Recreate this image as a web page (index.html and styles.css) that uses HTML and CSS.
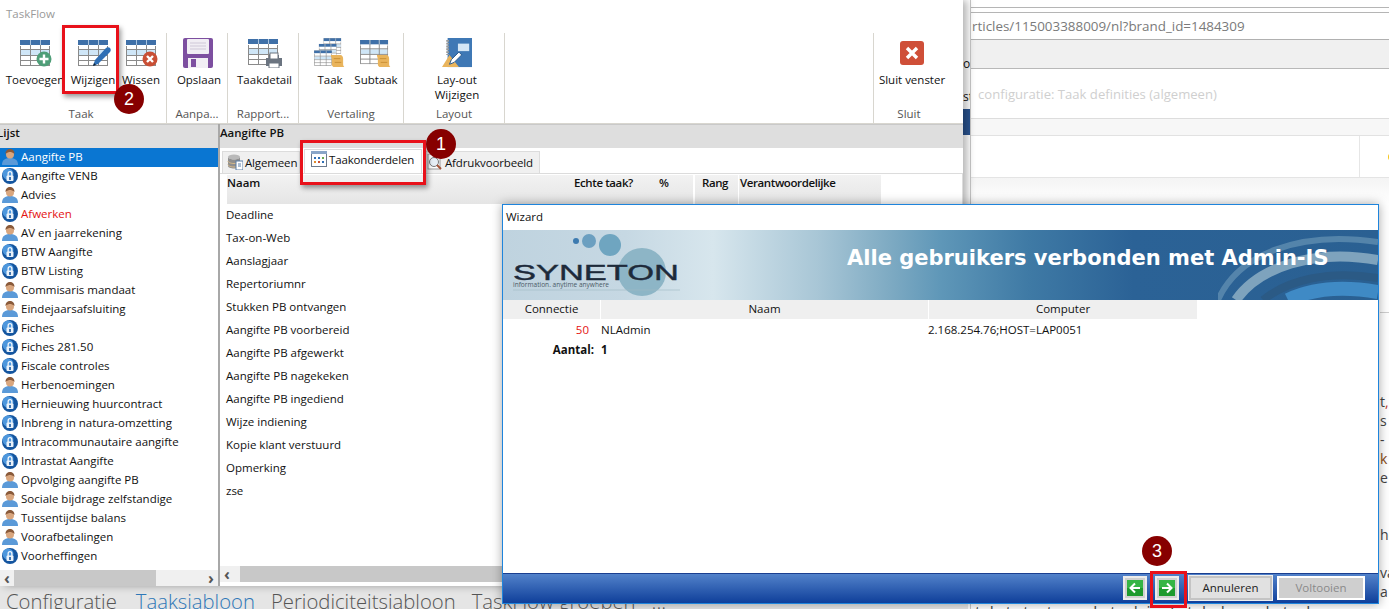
FILE: index.html
```html
<!DOCTYPE html>
<html lang="nl">
<head>
<meta charset="utf-8">
<title>TaskFlow</title>
<link rel="stylesheet" href="styles.css">
</head>
<body>
<svg class="defs" width="0" height="0" aria-hidden="true">
  <defs>
    <symbol id="grid" viewBox="0 0 30 26">
      <rect x=".5" y=".5" width="29" height="25" fill="#fff" stroke="#8a8a8a"/>
      <rect x="0" y="0" width="30" height="5" fill="#3f70a8"/>
      <rect x="0" y="5" width="30" height="1" fill="#fff"/>
      <rect x="1" y="10" width="28" height="5" fill="#cfe6f7"/>
      <path d="M0 9.5h30M0 15.5h30M0 20.5h30M10.5 0v26M20.5 0v26" stroke="#8a8a8a" fill="none"/>
      <path d="M10.5 0v5M20.5 0v5" stroke="#a9c3de"/>
    </symbol>
    <symbol id="scroll" viewBox="0 0 16 15">
      <path d="M1 1h10c2 0 3 2 3 4v6c0 2 1 3 2 3H5c-2 0-3-1-3-3V6C2 4 1 3 1 1z" fill="#e9b45c"/>
      <path d="M4 5h7M5 9h7" stroke="#c98f35" fill="none"/>
    </symbol>
    <symbol id="person" viewBox="0 0 16 16">
      <path d="M0 16c0-5 3-7 8-7s8 2 8 7z" fill="#5b9ad8"/>
      <circle cx="8" cy="5.5" r="4" fill="#d9a67e"/>
      <path d="M3.5 5C3.500 1.500 5.500 0 8 0s4.500 1.500 4.500 5C11 3.500 9 3 8 3S5 3.500 3.500 5z" fill="#8a5a3a"/>
    </symbol>
    <symbol id="globe" viewBox="0 0 16 16">
      <circle cx="8" cy="8" r="8" fill="#14559f"/>
      <circle cx="6" cy="6" r="5.500" fill="#4d97dd"/>
      <path d="M5.500 8V5.500a2.500 2.500 0 0 1 5 0V8H9.200V5.500a1.200 1.200 0 0 0-2.400 0V8z" fill="#f2f7fc"/>
      <rect x="4.500" y="7.500" width="7" height="5.500" rx="1" fill="#eaf2fa"/>
      <rect x="7.200" y="9" width="1.600" height="3" fill="#14559f"/>
    </symbol>
    <symbol id="db" viewBox="0 0 16 16">
      <ellipse cx="7" cy="3" rx="6" ry="2.500" fill="#b9b9b9"/>
      <path d="M1 3v9c0 1.500 3 2.500 6 2.500s6-1 6-2.500V3c0 1.500-3 2.500-6 2.500S1 4.500 1 3z" fill="#8f8f8f"/>
      <path d="M1 7c0 1.500 3 2.500 6 2.500S13 8.500 13 7M1 10.500c0 1.500 3 2.500 6 2.500s6-1 6-2.500" stroke="#d6b98a" fill="none"/>
      <rect x="9" y="7" width="7" height="9" fill="#fff" stroke="#5b7fa8"/>
      <path d="M11 10h3M11 12h3" stroke="#5b7fa8"/>
    </symbol>
    <symbol id="arrow" viewBox="0 0 16 16">
      <rect width="16" height="16" fill="#1d9a2d"/>
      <rect width="16" height="8" fill="#35b545"/>
      <path d="M3 8h9M8 3.500 12.500 8 8 12.500" stroke="#fff" stroke-width="2" fill="none"/>
    </symbol>
  </defs>
</svg>

<section class="win page">
  <div class="pg-top"></div>
  <div class="pg-addr">rticles/115003388009/nl?brand_id=1484309</div>
  <div class="pg-band"></div>
  <div class="pg-title">configuratie: Taak definities (algemeen)</div>
  <div class="pg-band2"></div>
  <div class="pg-row"><div class="pg-cell"></div><div class="pg-dot"></div></div>
  <div class="pg-fade"></div>
  <div class="pg-edge">
    <div class="pg-rule"></div>
    <div class="pg-lines">
      <div class="ln">t<span class="redc">,</span></div>
      <div class="ln">s</div>
      <div class="ln">-</div>
      <div class="ln brown">k</div>
      <div class="ln">e</div>
      <div class="ln"></div>
      <div class="ln"></div>
      <div class="ln">he</div>
      <div class="ln"></div>
      <div class="ln">va</div>
      <div class="ln">a</div>
    </div>
  </div>
  <div class="pg-cut">tekst staat van de taak in de tabel van de taak verdelen kan worden aangepast tot de voorwaarden</div>
</section>

<section class="win mid">
  <div class="mid-t1">or</div>
  <div class="mid-t2">st</div>
  <div class="mid-blue"></div>
</section>

<section class="win under">
  <nav class="crumbs">
    <span class="first">Configuratie</span><span class="act">Taaksjabloon</span><span>Periodiciteitsjabloon</span><span>TaskFlow groepen</span><span>...</span>
  </nav>
</section>

<section class="win app">
  <header class="app-title">TaskFlow</header>
  <div class="ribbon">
    <div class="grp g1">
      <div class="btns">
        <div class="btn w62"><svg class="ico" viewBox="0 0 34 30"><use href="#grid" width="30" height="26" x="0" y="2"/><circle cx="24" cy="21" r="7.500" fill="#4e9e78"/><path d="M24 16.500v9M19.500 21h9" stroke="#fff" stroke-width="2.400"/></svg><span>Toevoegen</span></div>
        <div class="btn w54"><svg class="ico" viewBox="0 0 34 30"><use href="#grid" width="30" height="26" x="0" y="2"/><path d="M15 28l2-6L28 10c1-1 3-1 4 0s1 3 0 4L20 26z" fill="#2f6fb5"/><path d="M15 28l1-3 2 2z" fill="#123"/></svg><span>Wijzigen</span></div>
        <div class="btn w42"><svg class="ico" viewBox="0 0 34 30"><use href="#grid" width="30" height="26" x="0" y="2"/><circle cx="24" cy="21" r="7.500" fill="#c94f35"/><path d="M21 18l6 6M27 18l-6 6" stroke="#fff" stroke-width="2.400"/></svg><span>Wissen</span></div>
      </div>
      <div class="grp-lbl">Taak</div>
    </div>
    <div class="grp g2">
      <div class="btns">
        <div class="btn w60 sh"><svg class="ico" viewBox="0 0 34 30"><rect x="1" y="0" width="30" height="30" rx="2" fill="#7d4fa0"/><rect x="5" y="1" width="22" height="15" rx="1" fill="#f1eef4"/><path d="M8 5h16M8 8h16M8 11h16" stroke="#cfc8d8"/><rect x="6" y="20" width="20" height="10" fill="#f1eef4"/><rect x="9" y="21" width="5" height="8" fill="#7d4fa0"/></svg><span>Opslaan</span></div>
      </div>
      <div class="grp-lbl">Aanpa...</div>
    </div>
    <div class="grp g3">
      <div class="btns">
        <div class="btn w70 sh3"><svg class="ico" viewBox="0 0 34 30"><use href="#grid" width="30" height="26" x="0" y="1"/><path d="M21 17h10v3h3v8h-3v2H21v-2h-3v-8h3z" fill="#6b7480"/><rect x="22" y="15" width="8" height="6" fill="#fff" stroke="#6b7480"/><rect x="21" y="25" width="10" height="5" fill="#fff" stroke="#6b7480"/></svg><span>Taakdetail</span></div>
      </div>
      <div class="grp-lbl">Rapport...</div>
    </div>
    <div class="grp g4">
      <div class="btns">
        <div class="btn w46"><svg class="ico" viewBox="0 0 34 32"><use href="#grid" width="19" height="17" x="10" y="0"/><use href="#grid" width="19" height="17" x="5" y="6"/><use href="#grid" width="19" height="17" x="0" y="13"/><use href="#scroll" width="16" height="15" x="17" y="17"/></svg><span>Taak</span></div>
        <div class="btn w46"><svg class="ico" viewBox="0 0 34 32"><use href="#grid" width="30" height="26" x="0" y="2"/><use href="#scroll" width="16" height="15" x="17" y="17"/></svg><span>Subtaak</span></div>
      </div>
      <div class="grp-lbl">Vertaling</div>
    </div>
    <div class="grp g5">
      <div class="btns">
        <div class="btn w100 sh6"><svg class="ico" viewBox="0 0 34 32"><rect x="7" y="0" width="26" height="31" fill="#3f78b5"/><rect x="18" y="6" width="12" height="8" fill="#d5e6f5"/><path d="M7 2v16" stroke="#999" stroke-width="3" stroke-dasharray="2 1"/><path d="M1 31 9 18l10 13z" fill="#e9b45c"/><path d="M9 28l2-5 8-8 3 3-8 8z" fill="#fff" stroke="#1d4f86"/></svg><span>Lay-out<br>Wijzigen</span></div>
      </div>
      <div class="grp-lbl">Layout</div>
    </div>
    <div class="ribbon-gap"></div>
    <div class="grp g6">
      <div class="btns">
        <div class="btn w76"><svg class="ico" viewBox="0 0 34 30"><rect x="5" y="3" width="24" height="24" rx="3" fill="#cf4f38"/><path d="M12 10l10 10M22 10 12 20" stroke="#fff" stroke-width="3.400"/></svg><span>Sluit venster</span></div>
      </div>
      <div class="grp-lbl">Sluit</div>
    </div>
  </div>
  <div class="split">
    <aside class="side">
      <div class="bar"><span class="bar-clip">Lijst</span></div>
      <ul class="list">
        <li class="sel"><svg class="li-ic"><use href="#person"/></svg>Aangifte PB</li>
        <li><svg class="li-ic"><use href="#globe"/></svg>Aangifte VENB</li>
        <li><svg class="li-ic"><use href="#person"/></svg>Advies</li>
        <li class="red"><svg class="li-ic"><use href="#globe"/></svg>Afwerken</li>
        <li><svg class="li-ic"><use href="#person"/></svg>AV en jaarrekening</li>
        <li><svg class="li-ic"><use href="#globe"/></svg>BTW Aangifte</li>
        <li><svg class="li-ic"><use href="#globe"/></svg>BTW Listing</li>
        <li><svg class="li-ic"><use href="#person"/></svg>Commisaris mandaat</li>
        <li><svg class="li-ic"><use href="#person"/></svg>Eindejaarsafsluiting</li>
        <li><svg class="li-ic"><use href="#globe"/></svg>Fiches</li>
        <li><svg class="li-ic"><use href="#globe"/></svg>Fiches 281.50</li>
        <li><svg class="li-ic"><use href="#globe"/></svg>Fiscale controles</li>
        <li><svg class="li-ic"><use href="#person"/></svg>Herbenoemingen</li>
        <li><svg class="li-ic"><use href="#globe"/></svg>Hernieuwing huurcontract</li>
        <li><svg class="li-ic"><use href="#globe"/></svg>Inbreng in natura-omzetting</li>
        <li><svg class="li-ic"><use href="#globe"/></svg>Intracommunautaire aangifte</li>
        <li><svg class="li-ic"><use href="#globe"/></svg>Intrastat Aangifte</li>
        <li><svg class="li-ic"><use href="#person"/></svg>Opvolging aangifte PB</li>
        <li><svg class="li-ic"><use href="#person"/></svg>Sociale bijdrage zelfstandige</li>
        <li><svg class="li-ic"><use href="#person"/></svg>Tussentijdse balans</li>
        <li><svg class="li-ic"><use href="#person"/></svg>Voorafbetalingen</li>
        <li><svg class="li-ic"><use href="#globe"/></svg>Voorheffingen</li>
      </ul>
      <div class="sb"><span class="sb-a">‹</span><div class="sb-track"><div class="sb-thumb side-thumb"></div></div><span class="sb-a">›</span></div>
    </aside>
    <main class="pane">
      <div class="bar bar-r">Aangifte PB</div>
      <div class="tabs">
        <div class="tab t1"><svg class="tab-ic"><use href="#db"/></svg>Algemeen</div>
        <div class="tab t2"><svg class="tab-ic" viewBox="0 0 16 16"><rect x=".5" y=".5" width="15" height="15" fill="#fff" stroke="#6c7a8c"/><rect width="16" height="3" fill="#8aa6c8"/><path d="M3 6h2v2H3zM7 6h2v2H7z" fill="#2f6fb5"/><path d="M11 6h2v2h-2z" fill="#6aa84f"/><path d="M3 10h2v2H3z" fill="#e08a2a"/><path d="M7 10h2v2H7z" fill="#c94f35"/><path d="M11 10h2v2h-2z" fill="#2f6fb5"/></svg>Taakonderdelen</div>
        <div class="tab t3"><svg class="tab-ic" viewBox="0 0 16 16"><rect x="1" y="0" width="12" height="15" fill="#fff" stroke="#999"/><circle cx="7" cy="8" r="4.500" fill="#e6eef5" stroke="#777"/><path d="M10 11l4 4" stroke="#a5553a" stroke-width="2"/></svg>Afdrukvoorbeeld</div>
      </div>
      <div class="tab-body">
        <div class="thead">
          <div class="th th-naam">Naam</div>
          <div class="th th-echt">Echte taak?</div>
          <div class="th th-pct">%</div>
          <div class="th th-rang">Rang</div>
          <div class="th th-verant">Verantwoordelijke</div>
        </div>
        <ul class="rows">
          <li>Deadline</li>
          <li>Tax-on-Web</li>
          <li>Aanslagjaar</li>
          <li>Repertoriumnr</li>
          <li>Stukken PB ontvangen</li>
          <li>Aangifte PB voorbereid</li>
          <li>Aangifte PB afgewerkt</li>
          <li>Aangifte PB nagekeken</li>
          <li>Aangifte PB ingediend</li>
          <li>Wijze indiening</li>
          <li>Kopie klant verstuurd</li>
          <li>Opmerking</li>
          <li>zse</li>
        </ul>
        <div class="sb sb-pane"><span class="sb-a">‹</span><div class="sb-track"><div class="sb-thumb pane-thumb"></div></div></div>
      </div>
    </main>
  </div>
</section>

<section class="win wizard">
  <header class="wz-title">Wizard</header>
  <div class="wz-banner">
    <svg class="wz-logo" viewBox="0 0 190 70" width="190" height="70">
      <circle cx="139" cy="42" r="24" fill="#8db5c6"/>
      <circle cx="73" cy="11" r="3" fill="#3d7bb0"/>
      <circle cx="86" cy="11" r="7" fill="#6b9fc0"/>
      <circle cx="107" cy="15" r="11" fill="#6fa5c0"/>
      <text x="10" y="50" class="logo-word" textLength="166" lengthAdjust="spacingAndGlyphs">SYNETON</text>
      <text x="10" y="57" class="logo-tag" textLength="96" lengthAdjust="spacingAndGlyphs">information. anytime anywhere</text>
      <path d="M10 60h167" stroke="#9fb8c4" stroke-width=".6"/>
    </svg>
    <svg class="wz-swirl" viewBox="0 0 160 70" width="160" height="70">
      <path d="M0 70C20 25 80 0 160 12" stroke="#5f8db0" stroke-width="6" fill="none" opacity=".8"/>
      <path d="M18 70C40 38 95 18 160 30" stroke="#7ea3bd" stroke-width="10" fill="none"/>
      <path d="M45 70C70 50 110 40 160 48" stroke="#2b5a85" stroke-width="8" fill="none"/>
      <path d="M70 70c25-12 55-14 90-8" stroke="#3f8ac5" stroke-width="14" fill="none"/>
    </svg>
    <h1 class="wz-h">Alle gebruikers verbonden met Admin-IS</h1>
  </div>
  <div class="wz-thead">
    <div class="c1">Connectie</div>
    <div class="c2">Naam</div>
    <div class="c3">Computer</div>
  </div>
  <div class="wz-row">
    <div class="c1 num">50</div>
    <div class="c2 lft">NLAdmin</div>
    <div class="c3 lft">2.168.254.76;HOST=LAP0051</div>
  </div>
  <div class="wz-row bold">
    <div class="c1 tot">Aantal:</div>
    <div class="c2 lft">1</div>
  </div>
  <div class="wz-fill"></div>
  <footer class="wz-foot">
    <div class="nav"><svg class="nav-ic" viewBox="0 0 16 16"><use href="#arrow" transform="matrix(-1 0 0 1 16 0)"/></svg></div>
    <div class="nav nav2"><svg class="nav-ic" viewBox="0 0 16 16"><use href="#arrow"/></svg></div>
    <button class="wbtn b-cancel">Annuleren</button>
    <button class="wbtn b-finish">Voltooien</button>
  </footer>
</section>

<div class="mark m-wij"></div>
<div class="mark m-tab"></div>
<div class="mark m-next"></div>
<div class="pin p1">1</div>
<div class="pin p2">2</div>
<div class="pin p3">3</div>
</body>
</html>
```

FILE: styles.css
```css
* { box-sizing: border-box; }
html, body { margin: 0; padding: 0; width: 1389px; height: 609px; overflow: hidden; background: #fff; }
body { position: relative; font: 11.5px/15px "Open Sans", "Noto Sans", sans-serif; color: #111; }
.defs { position: absolute; }
ul { list-style: none; margin: 0; padding: 0; }
.win { position: absolute; overflow: hidden; }

/* background browser page */
.page { left: 971px; top: 0; width: 418px; height: 609px; display: flex; flex-direction: column; background: #fff; }
.pg-top { height: 13px; border-bottom: 1px solid #b5b5b5; flex: none; background: linear-gradient(#fff 7px, #b5b5b5 7px, #b5b5b5 8px, #fff 8px); }
.pg-addr { height: 27px; flex: none; padding-left: 1px; line-height: 26px; font-size: 13.4px; color: #7a7a7a; border-bottom: 1px solid #b0b0b0; white-space: nowrap; }
.pg-band { height: 29px; flex: none; background: #f0f0f0; border-bottom: 1px solid #b8b8b8; }
.pg-title { height: 50px; flex: none; padding-left: 7px; line-height: 50px; font-size: 13.1px; color: #cfcfcf; border-bottom: 1px solid #ddd; white-space: nowrap; }
.pg-band2 { height: 17px; flex: none; background: #f7f7f7; border-bottom: 1px solid #e2e2e2; }
.pg-row { height: 42px; flex: none; display: flex; border-bottom: 1px solid #e4e4e4; align-items: center; }
.pg-cell { width: 389px; height: 100%; border-right: 1px solid #e6e6e6; flex: none; }
.pg-dot { width: 8px; height: 8px; border-radius: 50%; background: #f5c518; margin-left: 28px; flex: none; }
.pg-fade { height: 26px; flex: none; background: linear-gradient(#f4f4f4, #fff); }
.pg-edge { flex: 1; display: flex; flex-direction: column; padding-left: 409px; }
.pg-rule { height: 1px; width: 10px; background: #cfcfcf; margin-top: 108px; flex: none; }
.pg-lines { margin-top: 79px; font-size: 14px; line-height: 19px; color: #444; white-space: nowrap; }
.ln { height: 19px; }
.redc { color: #c0392b; }
.brown { color: #8a4b14; }
.pg-cut { position: absolute; left: 4px; top: 602px; width: 366px; overflow: hidden; font-size: 16px; line-height: 20px; color: #444; white-space: nowrap; }

.mid { left: 963px; top: 0; width: 8px; height: 609px; background: #fff; border-right: 1px solid #c8c8c8; display: flex; flex-direction: column; }
.mid-t1 { margin-top: 56px; font-size: 12px; line-height: 15px; }
.mid-t2 { margin-top: 18px; font-size: 12px; line-height: 15px; }
.mid-blue { height: 26px; margin-top: 5px; background: #2a5490; }

.under { left: 0; top: 586px; width: 968px; height: 23px; background: #e5e5e5; }
.crumbs { display: flex; gap: 16px; padding-left: 6px; font: 300 20.3px/31px "Open Sans", sans-serif; color: #555; white-space: nowrap; }
.first { margin-right: 3px; }
.act { color: #2f78b8; }

/* main app window */
.app { left: 0; top: 0; width: 963px; height: 586px; background: #fff; display: flex; flex-direction: column; box-shadow: 4px 0 8px rgba(0,0,0,.3); overflow: hidden; }
.app-title { height: 33px; flex: none; padding: 6px 0 0 6px; color: #9a9a9a; font-size: 11.5px; }
.ribbon { height: 91px; flex: none; display: flex; border-bottom: 1px solid #d8d6cf; }
.grp { display: flex; flex-direction: column; height: 90px; border-right: 1px solid #d8d6cf; padding-top: 5px; flex: none; }
.g1 { width: 167px; }
.g2 { width: 61px; }
.g3 { width: 71px; }
.g4 { width: 105px; }
.g5 { width: 101px; }
.g6 { width: 90px; border-right: 0; border-left: 1px solid #d8d6cf; }
.ribbon-gap { flex: 1; }
.btns { display: flex; height: 67px; flex: none; }
.g1 .btns { padding-left: 4px; }
.g4 .btns { padding-left: 8px; }
.btn { display: flex; flex-direction: column; align-items: center; text-align: center; flex: none; white-space: nowrap; }
.btn span { display: block; }
.ico { width: 34px; height: 30px; margin-bottom: 4px; flex: none; }
.g1 .ico { margin-left: 3px; }
.w42 { width: 42px; } .w46 { width: 46px; } .w54 { width: 54px; } .w60 { width: 60px; }
.w62 { width: 62px; } .w70 { width: 70px; } .w76 { width: 76px; } .w100 { width: 100px; }
.sh { padding-left: 4px; }
.sh3 { padding-left: 3px; }
.sh6 { padding-left: 6px; }
.grp-lbl { height: 18px; line-height: 18px; text-align: center; color: #555; }
.g1 .grp-lbl { padding-right: 4px; }
.g6 .grp-lbl { width: 70px; }

.split { flex: 1; display: flex; min-height: 0; }
.side { width: 220px; flex: none; display: flex; flex-direction: column; border-right: 2px solid #a8a8a8; }
.bar { height: 24px; flex: none; background: #dedede; line-height: 16px; font-weight: 600; border-top: 1px solid #c9c9c9; white-space: nowrap; }
.bar-clip { display: block; margin-left: -3px; }
.bar-r { padding-left: 0; }
.list { flex: 1; overflow: hidden; }
.list li { height: 19px; line-height: 18px; display: flex; align-items: center; padding: 0 0 1px 2px; white-space: nowrap; }
.li-ic { width: 16px; height: 16px; margin-right: 3px; flex: none; }
.sel { background: #0a76d2; color: #fff; }
.red { color: #e41212; }
.sb { height: 16px; flex: none; display: flex; align-items: center; background: #f0f0f0; }
.sb-a { width: 14px; text-align: center; font-size: 16px; line-height: 14px; font-weight: 700; color: #555; flex: none; }
.sb-track { flex: 1; height: 100%; }
.sb-thumb { height: 100%; background: #c8c8c8; }
.side-thumb { width: 142px; }
.pane-thumb { width: 100%; }

.pane { flex: 1; min-width: 0; display: flex; flex-direction: column; }
.tabs { height: 26px; flex: none; display: flex; padding: 2px 0 0 2px; align-items: flex-end; border-bottom: 1px solid #dcdcdc; letter-spacing: -.15px; }
.tab { height: 22px; display: flex; align-items: center; background: #f0f0f0; border: 1px solid #dcdcdc; border-bottom: 0; white-space: nowrap; padding: 0 0 1px 4px; flex: none; }
.t1 { width: 78px; margin-right: 4px; }
.t2 { width: 118px; height: 24px; background: #fff; padding: 0 0 5px 6px; margin-right: 3px; }
.t3 { width: 115px; padding-left: 1px; }
.tab-ic { width: 16px; height: 16px; margin-right: 2px; flex: none; }
.tab-body { flex: 1; display: flex; flex-direction: column; border-right: 1px solid #dcdcdc; min-height: 0; }
.thead { height: 29px; flex: none; display: flex; margin: 1px 0 0 7px; font-weight: 600; line-height: 16px; letter-spacing: -.4px; }
.th { background: linear-gradient(#f2f2f2, #e5e5e5); }
.th-naam { width: 340px; letter-spacing: 0; }
.th-echt { width: 85px; padding-left: 7px; }
.th-pct { width: 41px; padding-left: 7px; }
.th-rang { width: 43px; margin-left: 2px; padding-left: 7px; }
.th-verant { width: 142px; margin-left: 1px; padding-left: 1px; }
.rows { flex: 1; padding-left: 6px; overflow: hidden; }
.rows li { height: 23px; line-height: 22px; }
.sb-pane { margin-bottom: 4px; }
.sb-pane .sb-track { margin-left: 6px; }

/* wizard dialog */
.wizard { left: 502px; top: 204px; width: 877px; height: 400px; background: #fff; border: 1px solid #1e84dc; display: flex; flex-direction: column; box-shadow: 0 0 10px rgba(0,0,0,.35); overflow: hidden; }
.wz-title { height: 25px; flex: none; line-height: 24px; padding-left: 3px; }
.wz-banner { height: 70px; flex: none; position: relative; display: flex; align-items: center; background: linear-gradient(90deg, #bfd3df 0, #c6d8e3 14%, #d7e6ed 24%, #a8c6d6 36%, #7fabc3 44%, #5f97b8 50%, #3f7aa5 60%, #2b6296 72%, #2a6092 100%); }
.wz-logo { flex: none; margin-left: 0; }
.wz-h { margin: 0 0 0 154px; font: 700 21px/26px "DejaVu Sans", sans-serif; color: #fff; white-space: nowrap; position: relative; top: -7px; }
.wz-swirl { position: absolute; right: 0; top: 0; }
.logo-word { font: 400 22px "Liberation Sans", sans-serif; fill: #1d2a3a; stroke: #1d2a3a; stroke-width: .4; }
.logo-tag { font: 400 7px "Open Sans", sans-serif; fill: #4b5a66; }
.wz-thead, .wz-row { display: flex; flex: none; height: 20px; line-height: 20px; }
.wz-thead > div { background: #efefef; text-align: center; height: 19px; line-height: 18px; margin-right: 1px; }
.c1 { width: 97px; flex: none; }
.c2 { width: 327px; flex: none; }
.c3 { width: 268px; flex: none; }
.lft { text-align: left; }
.num { text-align: right; color: #e41212; padding-right: 12px; }
.tot { text-align: right; padding-right: 7px; }
.wz-thead .c1 { width: 97px; }
.wz-row .c1 { width: 98px; }
.wz-row .c2 { width: 327px; }
.bold { font-weight: 700; }
.wz-fill { flex: 1; }
.wz-foot { height: 30px; flex: none; display: flex; align-items: center; padding: 0 13px 2px 0; justify-content: flex-end; gap: 5px; border-top: 1px solid #1a3f90; background: linear-gradient(#5282ca, #0f3f9a); }
.nav { width: 24px; height: 24px; display: flex; align-items: center; justify-content: center; background: #d0d0d0; border: 2px solid #ececec; margin-right: 3px; }
.nav2 { margin-right: 5px; }
.nav-ic { width: 16px; height: 16px; }
.wbtn { height: 24px; font: 11.5px/15px "Open Sans", sans-serif; border: 2px solid #f4f4f4; outline: 0; padding: 0; }
.b-cancel { width: 83px; background: #e1e1e1; color: #222; border-color: #c4c4c4; box-shadow: 0 0 0 1px #eee; }
.b-finish { width: 88px; background: #cfcfcf; color: #8a8a8a; border-color: #fff; border-style: solid; }

/* callouts */
.mark { position: absolute; border: 3px solid #e8111a; box-shadow: 2px 3px 5px rgba(0,0,0,.4); }
.m-wij { left: 62px; top: 25px; width: 57px; height: 69px; }
.m-tab { left: 300px; top: 140px; width: 126px; height: 45px; }
.m-next { left: 1150px; top: 571px; width: 37px; height: 37px; box-shadow: none; }
.pin { position: absolute; width: 30px; height: 30px; border-radius: 50%; background: #870000; color: #fff; text-align: center; font: 18px/30px "Liberation Sans", sans-serif; }
.p1 { left: 426px; top: 129px; }
.p2 { left: 114px; top: 84px; }
.p3 { left: 1142px; top: 536px; }
```
